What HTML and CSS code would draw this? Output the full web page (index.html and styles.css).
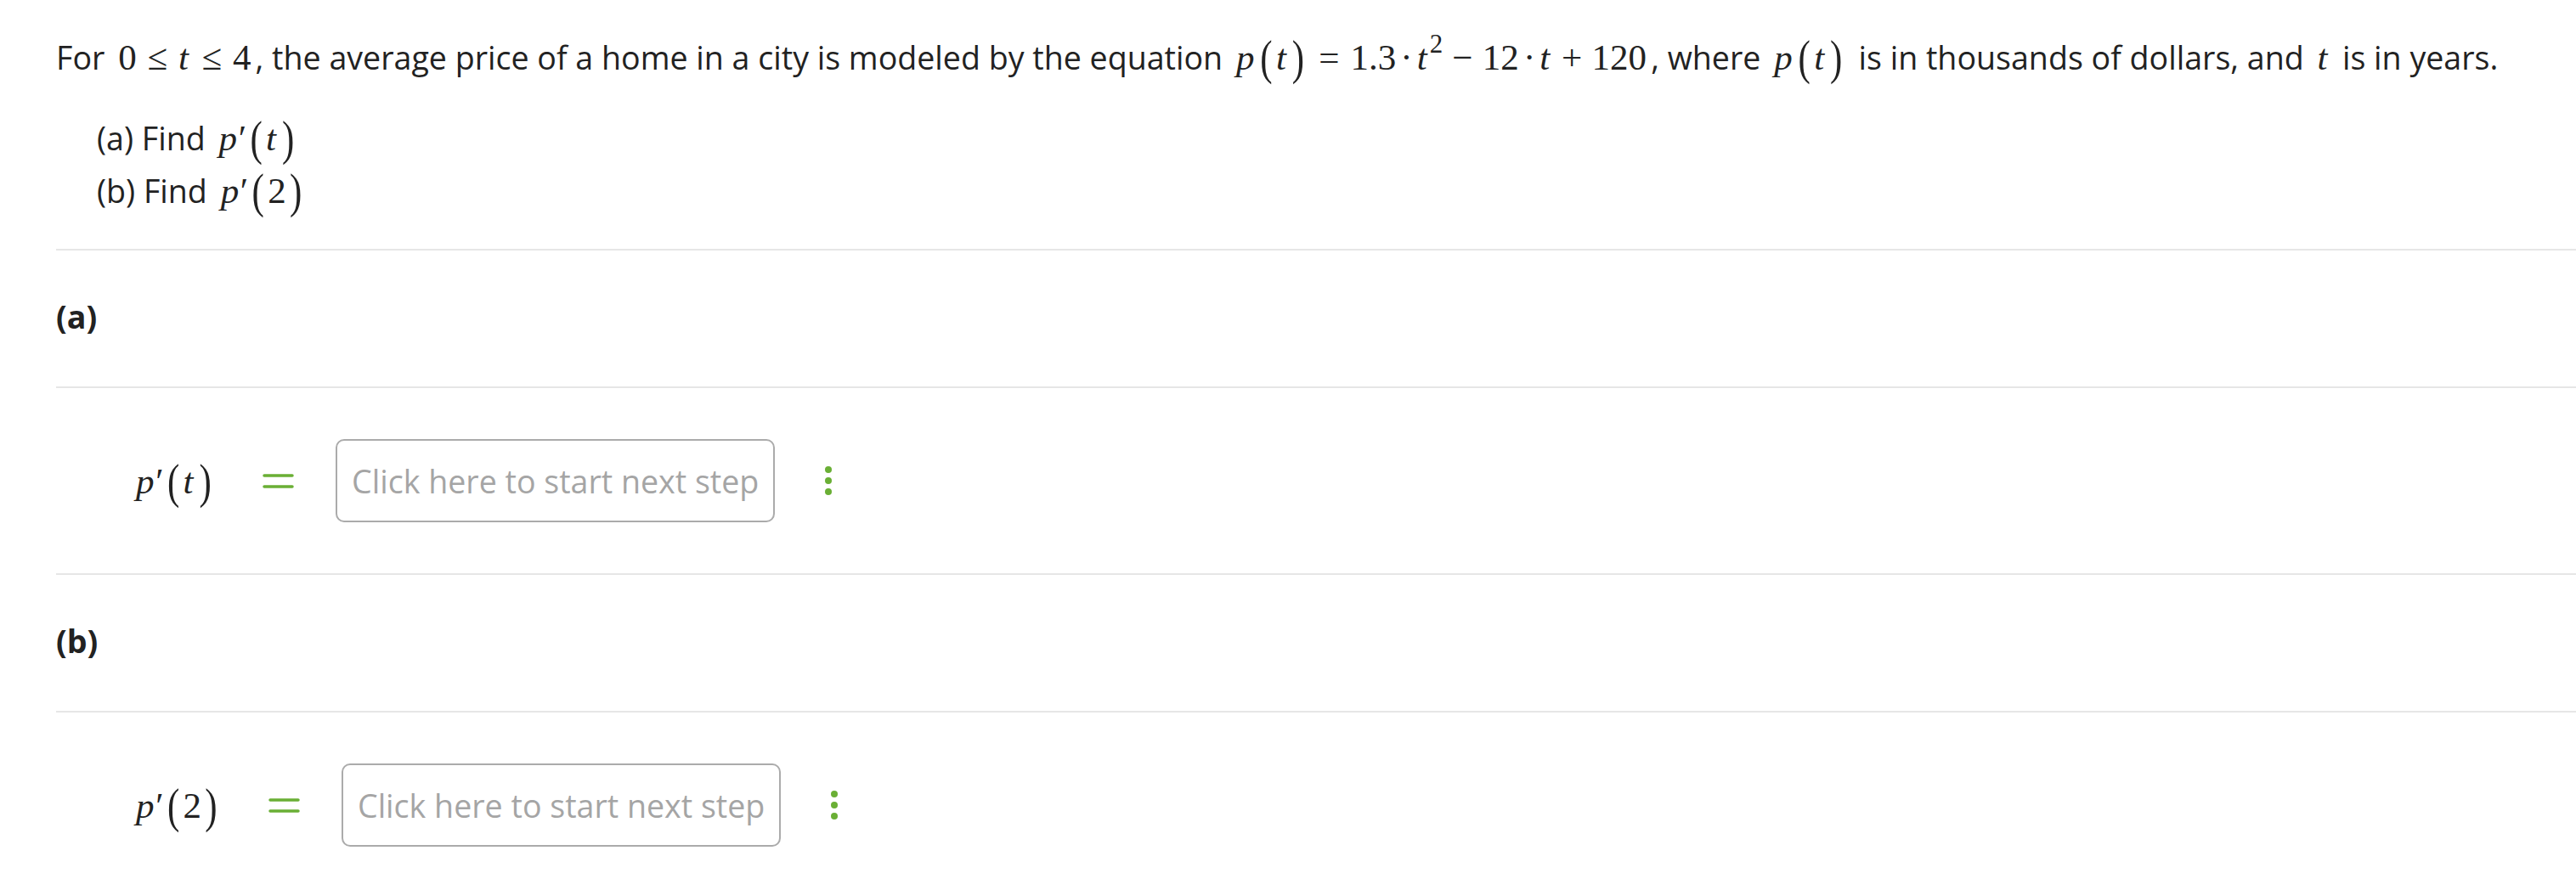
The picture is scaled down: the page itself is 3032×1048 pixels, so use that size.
FILE: index.html
```html
<!DOCTYPE html>
<html lang="en">
<head>
<meta charset="utf-8">
<title>Derivative problem</title>
<link rel="stylesheet" href="styles.css">
</head>
<body>
<div class="page">
  <div class="problem">
    <p class="intro">For <span class="m">0<span class="rel">≤</span><i>t</i><span class="rel">≤</span>4</span>, the average price of a home in a city is modeled by the equation <span class="m"><i>p</i><span class="pl">(</span><i>t</i><span class="pr">)</span><span class="rel">=</span>1.3<span class="dot">·</span><i>t</i><sup>2</sup><span class="bin">−</span>12<span class="dot">·</span><i>t</i><span class="bin">+</span>120</span>, where <span class="m"><i>p</i><span class="pl">(</span><i>t</i><span class="pr">)</span></span> is in thousands of dollars, and <span class="m"><i>t</i></span> is in years.</p>
    <div class="tasks">
      <div class="task">(a) Find <span class="m"><i>p</i><span class="prime">′</span><span class="pl">(</span><i>t</i><span class="pr">)</span></span></div>
      <div class="task">(b) Find <span class="m"><i>p</i><span class="prime">′</span><span class="pl">(</span>2<span class="pr">)</span></span></div>
    </div>
  </div>

  <div class="part-head">(a)</div>
  <div class="step">
    <span class="m label"><i>p</i><span class="prime">′</span><span class="pl">(</span><i>t</i><span class="pr">)</span></span>
    <svg class="eq" width="37" height="17" viewBox="0 0 37 17" aria-label="="><line x1="2" y1="2" x2="35" y2="2"/><line x1="2" y1="15" x2="35" y2="15"/></svg>
    <div class="input">Click here to start next step</div>
    <svg class="more" width="8" height="34" viewBox="0 0 8 34" aria-label="more"><circle cx="4" cy="4" r="4"/><circle cx="4" cy="17" r="4"/><circle cx="4" cy="30" r="4"/></svg>
  </div>

  <div class="part-head">(b)</div>
  <div class="step">
    <span class="m label"><i>p</i><span class="prime">′</span><span class="pl">(</span>2<span class="pr">)</span></span>
    <svg class="eq" width="37" height="17" viewBox="0 0 37 17" aria-label="="><line x1="2" y1="2" x2="35" y2="2"/><line x1="2" y1="15" x2="35" y2="15"/></svg>
    <div class="input">Click here to start next step</div>
    <svg class="more" width="8" height="34" viewBox="0 0 8 34" aria-label="more"><circle cx="4" cy="4" r="4"/><circle cx="4" cy="17" r="4"/><circle cx="4" cy="30" r="4"/></svg>
  </div>
</div>
</body>
</html>
```

FILE: styles.css
```css
html, body {
  margin: 0;
  padding: 0;
  background: #ffffff;
}

body {
  font-family: "Open Sans", "Noto Sans", sans-serif;
  font-size: 37.6px;
  color: #222222;
}

.page {
  padding-left: 66px;
}

.problem {
  padding: 37px 0 37px 0;
}

.intro {
  margin: 0;
  line-height: 62px;
  white-space: nowrap;
}

.tasks {
  margin-top: 33px;
  padding-left: 48px;
}

.task {
  line-height: 62px;
}

.m {
  font-family: "Liberation Serif", "Times New Roman", serif;
  font-size: 43px;
  line-height: 0;
  white-space: nowrap;
  margin: 0 0.12em 0 0.14em;
}

.m i {
  font-style: italic;
  margin-right: 0.06em;
}

.rel {
  margin: 0 0.3em;
}

.bin {
  margin: 0 0.26em;
}

.dot {
  margin: 0 0.12em;
}

.pl,
.pr {
  display: inline-block;
  transform: scaleY(1.34);
  margin: 0 0.1em;
}

.prime {
  margin-left: -0.02em;
}

.m sup {
  font-size: 0.72em;
  line-height: 0;
  vertical-align: 0.64em;
  margin-left: 0.01em;
}

.part-head {
  border-top: 2px solid #e6e6e6;
  padding: 58px 0 62px 0;
  line-height: 40px;
  font-weight: 700;
}

.step {
  border-top: 2px solid #e6e6e6;
  display: flex;
  align-items: center;
  padding: 60px 0 60px 94px;
}

.label {
  line-height: 43px;
  margin: 0 56px 0 0;
}

.eq {
  margin-right: 49px;
  stroke: #6aaf35;
  stroke-width: 3.5;
  stroke-linecap: round;
}

.input {
  box-sizing: border-box;
  height: 98px;
  display: flex;
  align-items: center;
  padding: 0 17px;
  border: 2px solid #ababab;
  border-radius: 10px;
  color: #a5a5a5;
  white-space: nowrap;
  margin-right: 59px;
}

.more {
  fill: #6aaf35;
}
```
